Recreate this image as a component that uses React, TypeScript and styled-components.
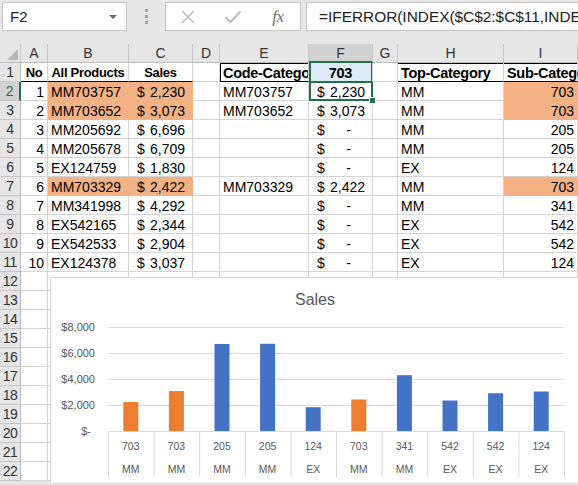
import styled, { createGlobalStyle, css } from "styled-components";

const GREEN = "#217346";
const ORANGE = "#f4b183";
const GRID = "#d4d4d4";

const GlobalStyle = createGlobalStyle`
  html, body {
    margin: 0;
    padding: 0;
    overflow: hidden;
    background: #ffffff;
  }
  body {
    font-family: "Liberation Sans", Arial, sans-serif;
  }
`;

const Page = styled.div`
  width: 578px;
  height: 485px;
  overflow: hidden;
  display: flex;
  flex-direction: column;
  background: #e6e6e6;
`;

/* ---------- formula bar ---------- */

const FormulaBar = styled.div`
  display: flex;
  align-items: flex-start;
  height: 44px;
  padding: 2px 0 0 2px;
  box-sizing: border-box;
  flex-shrink: 0;
`;

const Box = styled.div`
  height: 29px;
  box-sizing: border-box;
  background: #ffffff;
  border: 1px solid #c6c6c6;
`;

const NameBox = styled(Box)`
  width: 125px;
  display: flex;
  align-items: center;
  justify-content: space-between;
  padding: 0 9px 0 7px;
  font-size: 15px;
  color: #222;
`;

const Caret = styled.span`
  width: 0;
  height: 0;
  border-left: 4px solid transparent;
  border-right: 4px solid transparent;
  border-top: 4px solid #6a6a6a;
`;

const Splitter = styled.div`
  width: 38px;
  height: 29px;
  display: flex;
  flex-direction: column;
  align-items: center;
  justify-content: center;
  gap: 3px;
`;

const Dot = styled.span`
  width: 3px;
  height: 3px;
  background: #a6a6a6;
`;

const FxBox = styled(Box)`
  width: 136px;
  display: grid;
  grid-template-columns: 44px 46px 44px;
  align-items: center;
  justify-items: center;
`;

const FxText = styled.span`
  font-family: "Liberation Serif", "Times New Roman", serif;
  font-style: italic;
  font-size: 17px;
  color: #6e6e6e;
  letter-spacing: -0.5px;
`;

const FormulaInput = styled(Box)`
  flex: 1;
  margin-left: 5px;
  border-right: none;
  padding-left: 12px;
  font-size: 15.4px;
  line-height: 27px;
  color: #222;
  white-space: nowrap;
  overflow: hidden;
`;

/* ---------- sheet ---------- */

const Sheet = styled.div`
  position: relative;
  display: grid;
  grid-template-columns: 21px 27px 81px 64px 27px 89px 64px 25px 106px 74px 60px;
  grid-auto-rows: 19px;
  background: #ffffff;
  font-size: 14px;
  color: #000;
`;

const Corner = styled.div`
  position: relative;
  background: #e6e6e6;
  border-right: 1px solid #c6c6c6;
  border-bottom: 1px solid #bdbdbd;
  &::after {
    content: "";
    position: absolute;
    right: 2px;
    bottom: 2px;
    border-left: 11px solid transparent;
    border-bottom: 11px solid #b7b7b7;
  }
`;

const ColHead = styled.div<{ $selected?: boolean }>`
  box-sizing: border-box;
  background: ${(p) => (p.$selected ? "#d2d2d2" : "#e6e6e6")};
  border-right: 1px solid #c6c6c6;
  border-bottom: ${(p) => (p.$selected ? `2px solid ${GREEN}` : "1px solid #bdbdbd")};
  text-align: center;
  line-height: 18px;
  color: #333;
`;

const RowHead = styled.div<{ $selected?: boolean }>`
  box-sizing: border-box;
  background: ${(p) => (p.$selected ? "#d2d2d2" : "#e6e6e6")};
  border-right: ${(p) => (p.$selected ? `2px solid ${GREEN}` : "1px solid #bdbdbd")};
  border-bottom: 1px solid #c6c6c6;
  text-align: center;
  line-height: 19px;
  letter-spacing: -0.5px;
  color: ${(p) => (p.$selected ? GREEN : "#333")};
`;

type CellProps = {
  $align?: "left" | "right" | "center";
  $bold?: "small" | "large";
  $fill?: string;
  $darkBottom?: boolean;
  $darkTop?: boolean;
  $darkLeft?: boolean;
  $spill?: boolean;
};

const Cell = styled.div<CellProps>`
  box-sizing: border-box;
  padding: 1px 3px 0;
  line-height: 18px;
  white-space: nowrap;
  overflow: ${(p) => (p.$spill ? "visible" : "hidden")};
  text-align: ${(p) => p.$align ?? "left"};
  font-weight: ${(p) => (p.$bold ? 700 : 400)};
  font-size: ${(p) => (p.$bold === "small" ? "13px" : p.$bold === "large" ? "14.5px" : "14px")};
  letter-spacing: ${(p) => (p.$bold ? "-0.3px" : "0")};
  background: ${(p) => p.$fill ?? "#ffffff"};
  border-right: 1px solid ${(p) => p.$fill ?? GRID};
  border-bottom: 1px solid ${(p) => (p.$darkBottom ? "#000" : p.$fill ?? GRID)};
  ${(p) =>
    p.$spill &&
    css`
      position: relative;
      z-index: 1;
    `}
  ${(p) =>
    (p.$darkTop || p.$darkLeft) &&
    css`
      box-shadow: ${[
        p.$darkTop ? "inset 0 1px 0 #000" : "",
        p.$darkLeft ? "inset 1px 0 0 #000" : "",
      ]
        .filter(Boolean)
        .join(", ")};
    `}
`;

const Acct = styled(Cell)`
  display: flex;
  justify-content: space-between;
  padding: 1px 7px 0 8px;
`;

const Dash = styled.span`
  margin-right: 14px;
`;

const HeaderFCell = styled(Cell)`
  background: #ddebf7;
  border-right-color: ${GRID};
  border-bottom: 1px solid ${GREEN};
  box-shadow: inset 2px 0 0 ${GREEN}, inset -1px 0 0 ${GREEN};
  text-align: center;
`;

const ActiveCell = styled(Acct)`
  position: relative;
  overflow: visible;
  z-index: 2;
  border-right: 1px solid ${GREEN};
  border-bottom: 1px solid ${GREEN};
  box-shadow: inset 2px 0 0 ${GREEN}, inset 0 1px 0 ${GREEN}, inset -1px 0 0 ${GREEN},
    inset 0 -1px 0 ${GREEN};
`;

const FillHandle = styled.span`
  position: absolute;
  right: -4px;
  bottom: -4px;
  width: 5px;
  height: 5px;
  background: ${GREEN};
  border: 1px solid #ffffff;
`;

/* ---------- chart ---------- */

const Chart = styled.div`
  position: absolute;
  left: 50px;
  top: 233px;
  width: 530px;
  height: 207px;
  box-sizing: border-box;
  border: 1px solid #d9d9d9;
  background: #ffffff;
  z-index: 3;
  display: flex;
  flex-direction: column;
`;

const ChartTitle = styled.div`
  padding-top: 12px;
  height: 20px;
  line-height: 20px;
  text-align: center;
  font-size: 16px;
  color: #595959;
`;

const PlotSvg = styled.svg`
  display: block;
  font-family: "Liberation Sans", Arial, sans-serif;
`;

type Row = {
  no: number;
  code: string;
  sales: string;
  value: number;
  match?: string;
  top: string;
  sub: string;
};

const rows: Row[] = [
  { no: 1, code: "MM703757", sales: "2,230", value: 2230, match: "MM703757", top: "MM", sub: "703" },
  { no: 2, code: "MM703652", sales: "3,073", value: 3073, match: "MM703652", top: "MM", sub: "703" },
  { no: 3, code: "MM205692", sales: "6,696", value: 6696, top: "MM", sub: "205" },
  { no: 4, code: "MM205678", sales: "6,709", value: 6709, top: "MM", sub: "205" },
  { no: 5, code: "EX124759", sales: "1,830", value: 1830, top: "EX", sub: "124" },
  { no: 6, code: "MM703329", sales: "2,422", value: 2422, match: "MM703329", top: "MM", sub: "703" },
  { no: 7, code: "MM341998", sales: "4,292", value: 4292, top: "MM", sub: "341" },
  { no: 8, code: "EX542165", sales: "2,344", value: 2344, top: "EX", sub: "542" },
  { no: 9, code: "EX542533", sales: "2,904", value: 2904, top: "EX", sub: "542" },
  { no: 10, code: "EX124378", sales: "3,037", value: 3037, top: "EX", sub: "124" },
];

const columns = ["A", "B", "C", "D", "E", "F", "G", "H", "I", ""];

function SalesChart() {
  const left = 57;
  const right = 513;
  const base = 121;
  const step = (right - left) / rows.length;
  const scale = 104 / 8000;
  const ticks = [8000, 6000, 4000, 2000, 0];

  return (
    <Chart>
      <ChartTitle>Sales</ChartTitle>
      <PlotSvg width={528} height={173}>
        {ticks.map((t) => {
          const y = base - t * scale;
          return (
            <g key={t}>
              <line x1={left} x2={right} y1={y + 0.5} y2={y + 0.5} stroke="#d9d9d9" />
              <text
                x={t === 0 ? 40 : 44}
                y={y + 4}
                textAnchor="end"
                fontSize={11}
                fill="#595959"
              >
                {t === 0 ? "$-" : `$${t.toLocaleString("en-US")}`}
              </text>
            </g>
          );
        })}
        {rows.map((r, i) => {
          const x0 = left + i * step;
          const h = r.value * scale;
          const cx = x0 + step / 2;
          return (
            <g key={r.no}>
              <rect
                x={cx - 7.5}
                y={base - h}
                width={15}
                height={h}
                fill={r.sub === "703" ? "#ed7d31" : "#4472c4"}
              />
              <line x1={x0 + 0.5} x2={x0 + 0.5} y1={base} y2={167} stroke="#d9d9d9" />
              <text x={cx} y={140} textAnchor="middle" fontSize={10.5} fill="#595959">
                {r.sub}
              </text>
              <text x={cx} y={163} textAnchor="middle" fontSize={10.5} fill="#595959">
                {r.top}
              </text>
            </g>
          );
        })}
        <line x1={right + 0.5} x2={right + 0.5} y1={base} y2={167} stroke="#d9d9d9" />
      </PlotSvg>
    </Chart>
  );
}

function DataRow({ r, index }: { r: Row; index: number }) {
  const hit = r.sub === "703";
  const fill = hit ? ORANGE : undefined;
  const active = index === 0;
  return (
    <>
      <RowHead $selected={active}>{r.no + 1}</RowHead>
      <Cell $align="right">{r.no}</Cell>
      <Cell $fill={fill}>{r.code}</Cell>
      <Acct $fill={fill}>
        <span>$</span>
        <span>{r.sales}</span>
      </Acct>
      <Cell />
      <Cell>{r.match ?? ""}</Cell>
      {active ? (
        <ActiveCell>
          <span>$</span>
          <span>{r.sales}</span>
          <FillHandle />
        </ActiveCell>
      ) : (
        <Acct>
          <span>$</span>
          {r.match ? <span>{r.sales}</span> : <Dash>-</Dash>}
        </Acct>
      )}
      <Cell />
      <Cell>{r.top}</Cell>
      <Cell $align="right" $fill={fill}>
        {r.sub}
      </Cell>
      <Cell />
    </>
  );
}

export default function App() {
  const emptyRows = Array.from({ length: 11 }, (_, i) => i + 12);

  return (
    <>
      <GlobalStyle />
      <Page>
        <FormulaBar>
          <NameBox>
            <span>F2</span>
            <Caret />
          </NameBox>
          <Splitter>
            <Dot />
            <Dot />
            <Dot />
          </Splitter>
          <FxBox>
            <svg width="16" height="16" viewBox="0 0 16 16">
              <path d="M2 2 L14 14 M14 2 L2 14" stroke="#bdbdbd" strokeWidth="1.6" fill="none" />
            </svg>
            <svg width="18" height="14" viewBox="0 0 18 14">
              <path d="M1.5 7 L6.5 12 L16.5 1.5" stroke="#bdbdbd" strokeWidth="2.2" fill="none" />
            </svg>
            <FxText>fx</FxText>
          </FxBox>
          <FormulaInput>
            =IFERROR(INDEX($C$2:$C$11,INDEX(SMALL(IF($I$2:$I$11=$F$1,ROW($I$2:$I$11)-1),ROW()-1),0)),0)
          </FormulaInput>
        </FormulaBar>

        <Sheet>
          <Corner />
          {columns.map((c, i) => (
            <ColHead key={i} $selected={c === "F"}>
              {c}
            </ColHead>
          ))}

          <RowHead>1</RowHead>
          <Cell $bold="small" $align="center" $darkBottom>
            No
          </Cell>
          <Cell $bold="small" $align="center" $darkBottom>
            All Products
          </Cell>
          <Cell $bold="small" $align="center" $darkBottom>
            Sales
          </Cell>
          <Cell />
          <Cell $bold="large" $darkBottom $darkTop $darkLeft>
            Code-Category
          </Cell>
          <HeaderFCell $bold="large">703</HeaderFCell>
          <Cell />
          <Cell $bold="large" $darkBottom $darkTop>
            Top-Category
          </Cell>
          <Cell $bold="large" $darkBottom $darkTop $spill>
            Sub-Category
          </Cell>
          <Cell />

          {rows.map((r, i) => (
            <DataRow key={r.no} r={r} index={i} />
          ))}

          {emptyRows.map((n) => (
            <>
              <RowHead key={`h${n}`}>{n}</RowHead>
              {columns.map((_, i) => (
                <Cell key={`c${n}-${i}`} />
              ))}
            </>
          ))}

          <SalesChart />
        </Sheet>
      </Page>
    </>
  );
}
